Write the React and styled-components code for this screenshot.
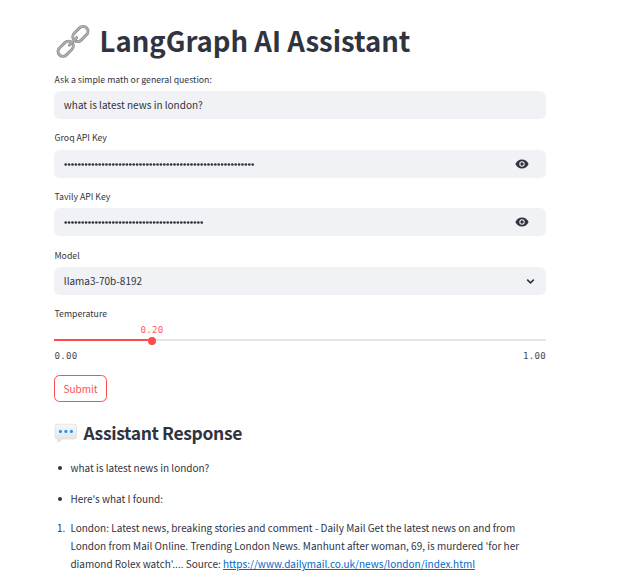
import React from "react";
import styled, { createGlobalStyle } from "styled-components";

const Global = createGlobalStyle`
  * { box-sizing: border-box; }
  html, body { margin: 0; background: #fff; }
  body {
    overflow: hidden;
    color: #31333f;
    font-family: "Noto Sans CJK SC", "Noto Sans", sans-serif;
    font-size: 10px;
  }
`;

const Page = styled.main`
  width: 546px;
  height: 575px;
  overflow: hidden;
  padding: 21px 0 0 54px;
`;

const Title = styled.h1`
  display: flex;
  align-items: center;
  gap: 7.5px;
  height: 39px;
  margin: 0 0 10px;
  font-size: 27.5px;
  line-height: 39px;
  font-weight: 700;
  white-space: nowrap;
  svg { flex: none; }
`;

const Field = styled.section`
  height: ${(p) => p.$height || 58.6}px;
`;

const Label = styled.label`
  display: block;
  height: 21px;
  padding-left: 0.5px;
  font-size: 8.75px;
  line-height: ${(p) => p.$line || 20}px;
  white-space: nowrap;
`;

const Control = styled.div`
  display: flex;
  align-items: center;
  justify-content: space-between;
  height: 28px;
  padding: 0 ${(p) => p.$right || 10}px 0 9.8px;
  border-radius: 5.6px;
  background: #f0f2f6;
  line-height: 28px;
  svg { flex: none; }
`;

const Secret = styled.svg`
  display: block;
`;

const Slider = styled.div`
  font-family: "DejaVu Sans Mono", monospace;
  font-size: 9.1px;
  letter-spacing: 0.3px;
`;

const Value = styled.div`
  width: 196px;
  height: 10px;
  line-height: 10px;
  text-align: center;
  color: #ff5a5a;
`;

const Track = styled.div`
  display: flex;
  align-items: center;
  height: 10px;
`;

const Rail = styled.div`
  flex: ${(p) => p.$part};
  height: 2px;
  background: ${(p) => p.$color};
`;

const Thumb = styled.div`
  width: 8px;
  height: 8px;
  margin: 1px -4px 0;
  border-radius: 50%;
  background: #ff4b4b;
  z-index: 1;
`;

const Limits = styled.div`
  display: flex;
  justify-content: space-between;
  height: 30px;
  padding-left: 0.5px;
  line-height: 22px;
  color: #484a55;
`;

const Submit = styled.button`
  display: block;
  width: 53px;
  height: 27px;
  padding: 0;
  border: 1px solid #ff4b4b;
  border-radius: 5.6px;
  background: #fff;
  color: #ff4b4b;
  font: inherit;
  line-height: 25px;
`;

const Heading = styled.h2`
  display: flex;
  align-items: center;
  gap: 6.4px;
  height: 28px;
  margin: 17px 0 12px;
  font-size: 17.5px;
  letter-spacing: -0.36px;
  line-height: 28px;
  font-weight: 600;
  white-space: nowrap;
  svg { flex: none; }
`;

const Item = styled.div`
  display: flex;
  height: ${(p) => p.$height}px;
  line-height: 18px;
  white-space: nowrap;
`;

const Marker = styled.span`
  display: flex;
  align-items: center;
  width: 16.4px;
  height: 18px;
  padding-left: ${(p) => p.$indent}px;
`;

const Bullet = styled.i`
  width: 4px;
  height: 4px;
  border-radius: 50%;
  background: #31333f;
`;

const Line = styled.div`
  height: 18px;
`;

const Link = styled.a`
  color: #0068c9;
  text-decoration: underline;
`;

const LinkIcon = () => (
  <svg width="38" height="38" viewBox="-1.2 -1.6 40.4 40.4" fill="none">
    <g transform="rotate(-45 19 19)">
      <rect x="-1.3" y="13.8" width="18.5" height="10.4" rx="5.2" stroke="#8c8c8c" strokeWidth="3.2" />
      <rect x="-1.3" y="13.8" width="18.5" height="10.4" rx="5.2" stroke="#acacac" strokeWidth="2" />
      <rect x="20.8" y="13.8" width="18.5" height="10.4" rx="5.2" stroke="#8c8c8c" strokeWidth="3.2" />
      <rect x="20.8" y="13.8" width="18.5" height="10.4" rx="5.2" stroke="#acacac" strokeWidth="2" />
      <path d="M13.5 19H24.5" stroke="#8c8c8c" strokeWidth="3.2" strokeLinecap="round" />
      <path d="M13.5 18.8H24.5" stroke="#b0b0b0" strokeWidth="1.8" strokeLinecap="round" />
    </g>
  </svg>
);

const SpeechIcon = () => (
  <svg width="23" height="20" viewBox="0 0 23 20">
    <defs>
      <linearGradient id="bubble" x1="0" y1="0" x2="0" y2="1">
        <stop offset="0" stopColor="#f8f8f8" />
        <stop offset="1" stopColor="#e2e2e2" />
      </linearGradient>
    </defs>
    <path d="M3 1.2H20.5Q22.5 1.2 22.5 3.2V14Q22.5 16 20.5 16H8.5Q6.5 18.7 3 19Q4.7 17.5 4.3 16H3Q1.2 16 1.2 14V3.2Q1.2 1.2 3 1.2Z" fill="url(#bubble)" stroke="#d6d6d6" strokeWidth=".6" />
    <g fill="#2196f3">
      <circle cx="6.4" cy="8.4" r="1.6" />
      <circle cx="11.9" cy="8.4" r="1.6" />
      <circle cx="17.4" cy="8.4" r="1.6" />
    </g>
  </svg>
);

const EyeIcon = () => (
  <svg width="14" height="10" viewBox="0 0 14 10">
    <path d="M7 .4C10 .4 12.6 2.3 13.6 5C12.6 7.7 10 9.6 7 9.6S1.4 7.7.4 5C1.4 2.3 4 .4 7 .4Z" fill="#31333f" />
    <circle cx="7" cy="5" r="2.7" fill="#f0f2f6" />
    <circle cx="7" cy="5" r="1.7" fill="#31333f" />
  </svg>
);

const Chevron = () => (
  <svg width="9" height="7" viewBox="0 0 9 7" fill="none">
    <path d="M1.2 1.6L4.5 4.9L7.8 1.6" stroke="#31333f" strokeWidth="1.5" />
  </svg>
);

const SecretDots = ({ count }) => (
  <Secret width={count * 3.4} height="4" fill="#31333f">
    {Array.from({ length: count }, (_, i) => (
      <circle key={i} cx={1.7 + i * 3.4} cy="2.5" r="1.35" />
    ))}
  </Secret>
);

export default function App() {
  return (
    <>
      <Global />
      <Page>
        <Title><LinkIcon /><span>LangGraph AI Assistant</span></Title>
        <Field $height={59}>
          <Label>Ask a simple math or general question:</Label>
          <Control>what is latest news in london?</Control>
        </Field>
        <Field $height={58}>
          <Label $line={18}>Groq API Key</Label>
          <Control $right={17}><SecretDots count={56} /><EyeIcon /></Control>
        </Field>
        <Field $height={59}>
          <Label>Tavily API Key</Label>
          <Control $right={17}><SecretDots count={41} /><EyeIcon /></Control>
        </Field>
        <Field $height={58.4}>
          <Label>Model</Label>
          <Control $right={11}>llama3-70b-8192<Chevron /></Control>
        </Field>
        <Label>Temperature</Label>
        <Slider>
          <Value>0.20</Value>
          <Track>
            <Rail $part={20} $color="#ff4b4b" />
            <Thumb />
            <Rail $part={80} $color="#e1e6ed" />
          </Track>
          <Limits><span>0.00</span><span>1.00</span></Limits>
        </Slider>
        <Submit>Submit</Submit>
        <Heading><SpeechIcon /><span>Assistant Response</span></Heading>
        <Item $height={31}>
          <Marker $indent={4}><Bullet /></Marker>
          <span>what is latest news in london?</span>
        </Item>
        <Item $height={29}>
          <Marker $indent={4}><Bullet /></Marker>
          <span>Here's what I found:</span>
        </Item>
        <Item $height={54}>
          <Marker $indent={3}>1.</Marker>
          <div>
            <Line>London: Latest news, breaking stories and comment - Daily Mail Get the latest news on and from</Line>
            <Line>London from Mail Online. Trending London News. Manhunt after woman, 69, is murdered 'for her</Line>
            <Line>diamond Rolex watch'.... Source: <Link href="https://www.dailymail.co.uk/news/london/index.html">https://www.dailymail.co.uk/news/london/index.html</Link></Line>
          </div>
        </Item>
      </Page>
    </>
  );
}
